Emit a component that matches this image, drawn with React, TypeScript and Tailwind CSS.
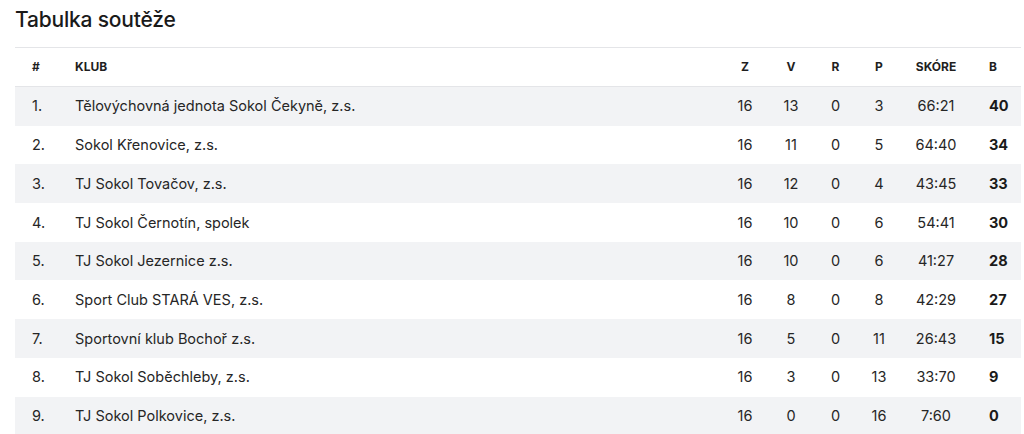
const rows = [
  ["1.", "Tělovýchovná jednota Sokol Čekyně, z.s.", 16, 13, 0, 3, "66:21", 40],
  ["2.", "Sokol Křenovice, z.s.", 16, 11, 0, 5, "64:40", 34],
  ["3.", "TJ Sokol Tovačov, z.s.", 16, 12, 0, 4, "43:45", 33],
  ["4.", "TJ Sokol Černotín, spolek", 16, 10, 0, 6, "54:41", 30],
  ["5.", "TJ Sokol Jezernice z.s.", 16, 10, 0, 6, "41:27", 28],
  ["6.", "Sport Club STARÁ VES, z.s.", 16, 8, 0, 8, "42:29", 27],
  ["7.", "Sportovní klub Bochoř z.s.", 16, 5, 0, 11, "26:43", 15],
  ["8.", "TJ Sokol Soběchleby, z.s.", 16, 3, 0, 13, "33:70", 9],
  ["9.", "TJ Sokol Polkovice, z.s.", 16, 0, 0, 16, "7:60", 0],
] as const;

const cols = "grid grid-cols-[42px_1fr_46px_46px_43px_44px_70px_50px] items-center";

export default function App() {
  return (
    <div className="w-[1024px] h-[434px] overflow-hidden bg-white pl-[15px] pr-[3px] font-['Inter',sans-serif] text-[#262626]">
      <h2 className="pt-[4px] h-[47px] text-[21px] font-medium tracking-[-0.2px] text-[#1a1a1a]">
        Tabulka soutěže
      </h2>
      <div className="border-t border-[#e4e5e8]">
        <div className={`${cols} h-[39px] border-b border-[#e4e5e8] text-[12px] font-bold text-[#1f1f1f]`}>
          <div className="pl-[17px]">#</div>
          <div className="pl-[18px]">KLUB</div>
          <div className="text-center">Z</div>
          <div className="text-center">V</div>
          <div className="text-center">R</div>
          <div className="text-center">P</div>
          <div className="text-center">SKÓRE</div>
          <div className="pl-[18px]">B</div>
        </div>
        {rows.map((r, i) => (
          <div
            key={r[0]}
            className={`${cols} h-[38.7px] text-[14.5px] ${i % 2 === 0 ? "bg-[#f2f3f5]" : "bg-white"}`}
          >
            <div className="pl-[17px]">{r[0]}</div>
            <div className="pl-[18px]">{r[1]}</div>
            <div className="text-center">{r[2]}</div>
            <div className="text-center">{r[3]}</div>
            <div className="text-center">{r[4]}</div>
            <div className="text-center">{r[5]}</div>
            <div className="text-center">{r[6]}</div>
            <div className="pl-[18px] font-bold text-[#1a1a1a]">{r[7]}</div>
          </div>
        ))}
      </div>
    </div>
  );
}
